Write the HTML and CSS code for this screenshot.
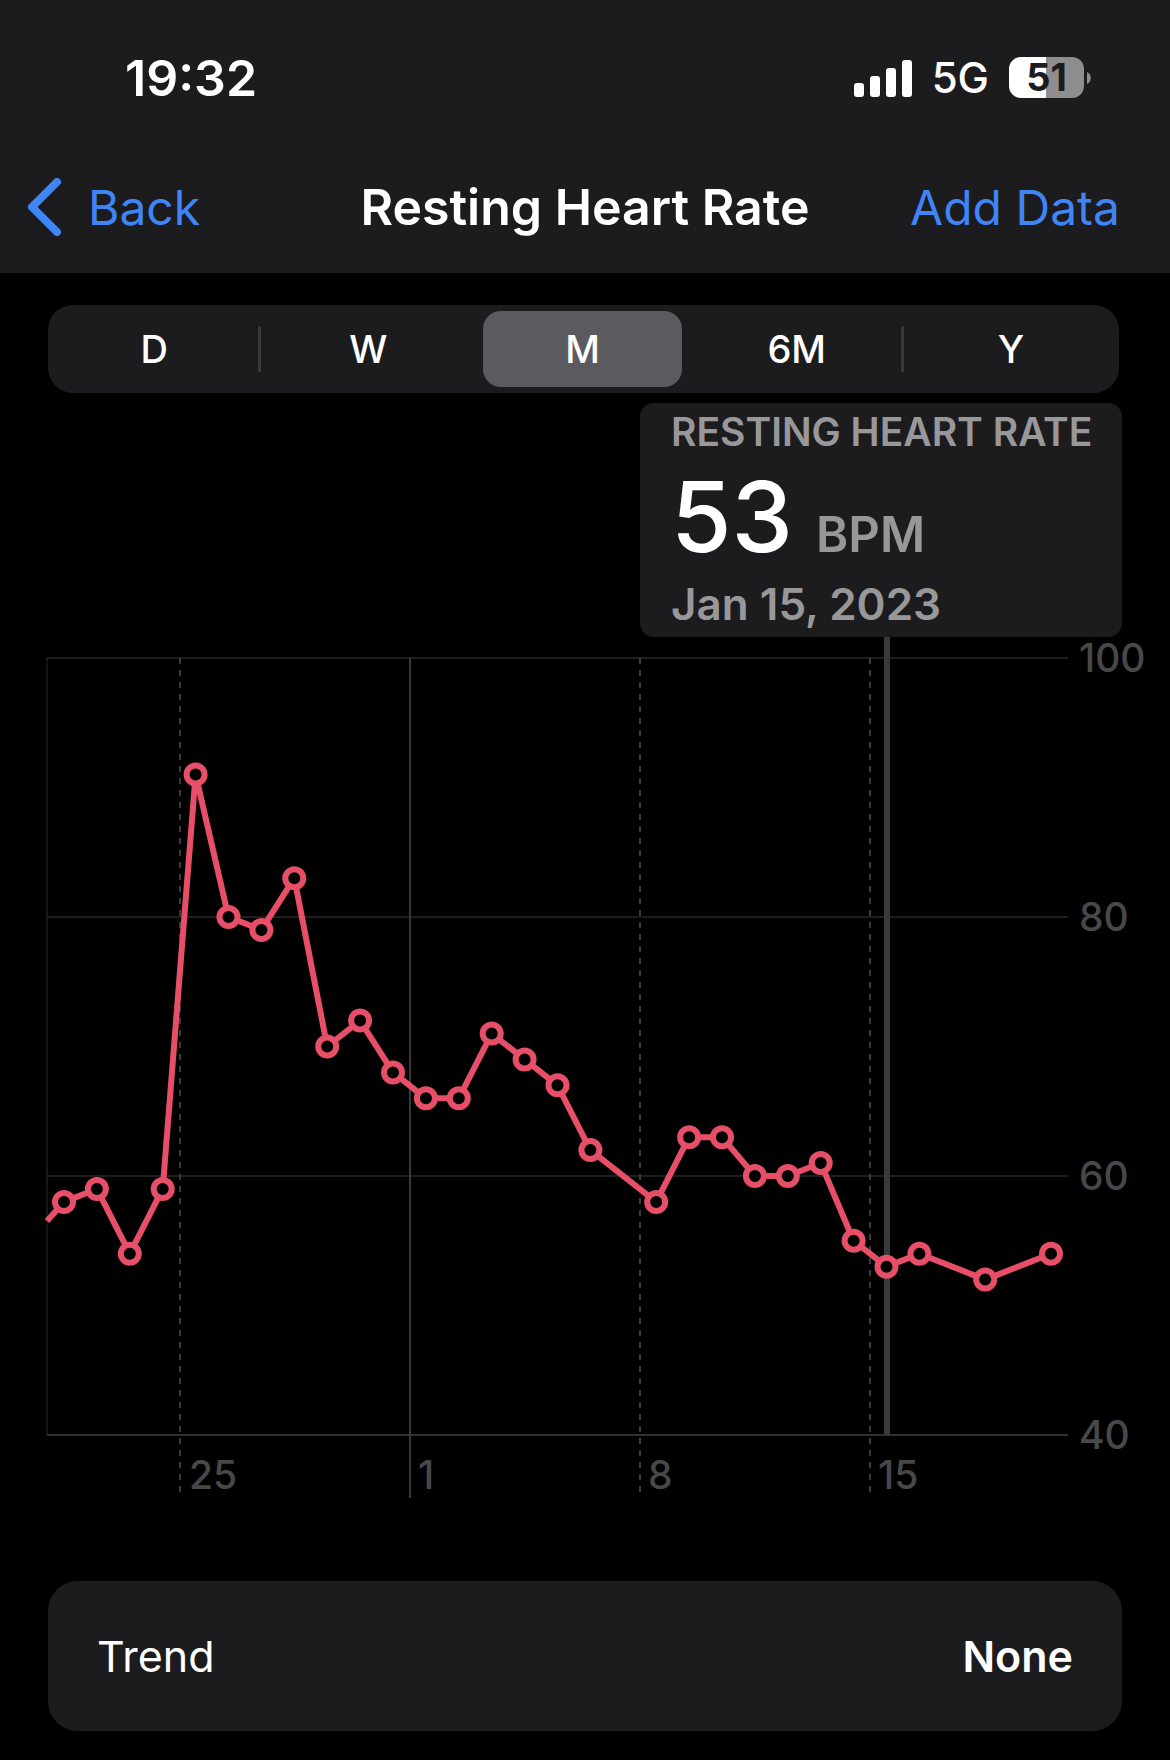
FILE: index.html
```html
<!DOCTYPE html>
<html lang="en">
<head>
<meta charset="utf-8">
<meta name="viewport" content="width=device-width, initial-scale=1">
<title>Resting Heart Rate</title>
<link rel="stylesheet" href="styles.css">
</head>
<body>
<header class="top">
  <div class="status">
    <time class="clock">19:32</time>
    <div class="indicators">
      <svg class="signal" viewBox="0 0 58 38" width="58" height="38" aria-hidden="true">
        <rect x="0" y="24" width="10" height="14" rx="3"/>
        <rect x="16" y="17" width="10" height="21" rx="3"/>
        <rect x="32" y="9" width="10" height="29" rx="3"/>
        <rect x="48" y="1" width="10" height="37" rx="3"/>
      </svg>
      <span class="network">5G</span>
      <span class="battery"><span class="battery-level">51</span><svg class="battery-cap" viewBox="0 0 4 12" width="4" height="12" aria-hidden="true"><path d="M0 0C5 2 5 10 0 12Z"/></svg></span>
    </div>
  </div>
  <nav class="nav">
    <a class="back" href="#">
      <svg viewBox="0 0 34 58" width="34" height="58" aria-hidden="true"><path d="M29 4L4 29L29 54"/></svg>
      <span>Back</span>
    </a>
    <h1 class="title">Resting Heart Rate</h1>
    <button class="add" type="button">Add Data</button>
  </nav>
</header>
<main>
  <fieldset class="range" aria-label="Time range">
    <label class="segment divided"><input type="radio" name="range"><span>D</span></label>
    <label class="segment"><input type="radio" name="range"><span>W</span></label>
    <label class="segment"><input type="radio" name="range" checked><span>M</span></label>
    <label class="segment divided"><input type="radio" name="range"><span>6M</span></label>
    <label class="segment"><input type="radio" name="range"><span>Y</span></label>
  </fieldset>
  <section class="chart">
    <div class="callout">
      <div class="callout-label">RESTING HEART RATE</div>
      <div class="reading"><span class="value">53</span><span class="unit">BPM</span></div>
      <div class="date">Jan 15, 2023</div>
    </div>
    <svg class="plot" viewBox="0 0 1170 864" role="img" aria-label="Resting heart rate by day">
      <g class="grid">
        <path d="M47 21H1068M47 280H1068M47 539H1068"/>
        <path class="edge" d="M47 21V798"/>
        <path class="axis" d="M47 798H1068"/>
        <path class="week" d="M180 21V861M640 21V861M870 21V861"/>
        <path class="month" d="M410 21V861"/>
      </g>
      <path class="cursor" d="M887 0V798"/>
      <g id="series"></g>
      <g class="tick">
        <text x="1079" y="35">100</text>
        <text x="1079" y="294">80</text>
        <text x="1079" y="553">60</text>
        <text x="1079" y="812">40</text>
        <text x="189" y="852">25</text>
        <text x="418" y="852">1</text>
        <text x="648" y="852">8</text>
        <text x="878" y="852">15</text>
      </g>
    </svg>
  </section>
  <section class="trend"><span>Trend</span><strong>None</strong></section>
</main>
<script src="chart.js"></script>
</body>
</html>
```
FILE: styles.css
```css
* { box-sizing: border-box; }
body {
  margin: 0;
  background: #000;
  color: #fff;
  font-family: Inter, "Liberation Sans", sans-serif;
}
.top { background: #1c1c1e; }
.status {
  display: flex;
  justify-content: space-between;
  align-items: center;
  height: 141px;
  padding: 14px 79px 0 125px;
}
.clock { font-size: 50px; font-weight: 600; }
.indicators { display: flex; align-items: center; gap: 20px; }
.signal { fill: #fff; }
.network { font-size: 42px; font-weight: 500; line-height: 42px; }
.battery { display: flex; align-items: center; gap: 3px; }
.battery-level {
  width: 75px;
  height: 41px;
  border-radius: 12px;
  background: linear-gradient(to right, #fff 50%, #8e8e90 50%);
  color: #1c1c1e;
  font-size: 38px;
  font-weight: 700;
  line-height: 41px;
  text-align: center;
}
.battery-cap { fill: #8e8e90; }
.nav {
  display: grid;
  grid-template-columns: 1fr auto 1fr;
  align-items: center;
  height: 132px;
  padding: 0 28px;
}
.back {
  display: flex;
  align-items: center;
  gap: 26px;
  color: #3f85f5;
  font-size: 48px;
  text-decoration: none;
}
.back svg { fill: none; stroke: #3f85f5; stroke-width: 8; stroke-linecap: round; stroke-linejoin: round; }
.title { margin: 0; font-size: 50px; font-weight: 600; }
.add {
  justify-self: end;
  padding: 0 22px 0 0;
  border: 0;
  background: none;
  color: #3f85f5;
  font: inherit;
  font-size: 48px;
}
.range {
  display: flex;
  height: 88px;
  margin: 32px 51px 0 48px;
  padding: 0;
  border: 0;
  border-radius: 25px;
  background: #1c1c1f;
}
.segment {
  position: relative;
  display: flex;
  flex: 1;
  padding: 6px 9px 6px 7px;
  font-size: 38px;
  font-weight: 500;
}
.segment input { position: absolute; opacity: 0; }
.segment span {
  display: flex;
  flex: 1;
  align-items: center;
  justify-content: center;
  border-radius: 18px;
}
.segment input:checked + span { background: #5b5a5f; }
.divided::after {
  content: "";
  position: absolute;
  top: 21px;
  right: 1px;
  width: 3px;
  height: 46px;
  border-radius: 2px;
  background: #3a3a3d;
}
.chart { display: flex; flex-direction: column; margin-top: 10px; }
.callout {
  align-self: flex-end;
  width: 482px;
  margin-right: 48px;
  padding: 8px 0 5px 31px;
  border-radius: 14px;
  background: #1c1c1e;
  color: #98989b;
  font-weight: 600;
  white-space: nowrap;
}
.callout-label { font-size: 39px; line-height: 42px; }
.reading { display: flex; align-items: baseline; gap: 23px; margin-top: 5px; }
.value { color: #fff; font-size: 98px; font-weight: 500; line-height: 118px; }
.unit { font-size: 49px; line-height: 60px; }
.date { font-size: 44px; line-height: 56px; }
.plot { display: block; width: 100%; height: auto; overflow: visible; }
.grid path { fill: none; stroke: #1e1e1f; stroke-width: 2; }
.grid .edge { stroke: #2a2a2b; stroke-width: 1; }
.grid .axis { stroke: #303032; }
.grid .week { stroke: #3a3a3c; stroke-dasharray: 6 6; }
.grid .month { stroke: #38383a; }
.cursor { stroke: #3a3a3b; stroke-width: 6; }
.line { fill: none; stroke: #e64f67; stroke-width: 6; stroke-linejoin: round; }
.point { fill: #000; stroke: #e64f67; stroke-width: 6; }
.tick text { fill: #48484a; font-size: 39px; font-weight: 500; }
.trend {
  display: flex;
  justify-content: space-between;
  align-items: center;
  height: 150px;
  margin: 80px 48px 29px;
  padding: 0 49px;
  border-radius: 30px;
  background: #1c1c1e;
  font-size: 43px;
}
.trend strong { font-weight: 600; }
```
FILE: chart.js
```js
// Daily readings as [day offset, beats per minute]; days without a reading are left out.
const readings = [
  [0, 58], [1, 59], [2, 54], [3, 59], [4, 91], [5, 80], [6, 79], [7, 83],
  [8, 70], [9, 72], [10, 68], [11, 66], [12, 66], [13, 71], [14, 69], [15, 67],
  [16, 62], [18, 58], [19, 63], [20, 63], [21, 60], [22, 60], [23, 61],
  [24, 55], [25, 53], [26, 54], [28, 52], [30, 54]
];
const points = readings.map(([day, bpm]) => [64 + day * 32.9, 798 - (bpm - 40) * 12.95]);
const path = "M47 584L" + points.map(p => p.join(" ")).join("L");
document.getElementById("series").innerHTML =
  `<path class="line" d="${path}"/>` +
  points.map(([x, y]) => `<circle class="point" cx="${x}" cy="${y}" r="9"/>`).join("");
```
